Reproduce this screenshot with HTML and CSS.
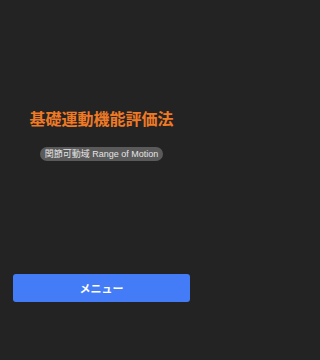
FILE: index.html
```html
<!DOCTYPE html>
<html lang="ja">
<head>
<meta charset="utf-8">
<link rel="stylesheet" href="styles.css">
</head>
<body>
<div class="screen">
  <div class="hero">
    <h1 class="title">基礎運動機能評価法</h1>
    <span class="pill">関節可動域 Range of Motion</span>
  </div>
  <div class="actions">
    <button class="menu-btn">メニュー</button>
  </div>
</div>
</body>
</html>
```
FILE: styles.css
```css
html, body {
  margin: 0;
  padding: 0;
  background: #232323;
}
body {
  font-family: "Noto Sans CJK JP", "Liberation Sans", sans-serif;
}
.screen {
  width: 203px;
  height: 360px;
  display: flex;
  flex-direction: column;
  box-sizing: border-box;
}
.hero {
  display: flex;
  flex-direction: column;
  align-items: center;
  padding-top: 107px;
}
.title {
  margin: 0;
  font-size: 16px;
  line-height: 23px;
  font-weight: 700;
  color: #ee7a26;
  letter-spacing: 0;
}
.pill {
  margin-top: 17px;
  height: 14px;
  line-height: 14px;
  padding: 0 5px;
  border-radius: 7px;
  background: #5a5a5a;
  color: #e4e4e4;
  font-family: "Liberation Sans", "Noto Sans CJK JP", sans-serif;
  font-size: 9px;
}
.actions {
  margin-top: auto;
  padding: 0 13px 58px;
}
.menu-btn {
  display: block;
  width: 100%;
  height: 28px;
  border: none;
  border-radius: 3px;
  background: #447cf8;
  color: #ffffff;
  font-family: "Noto Sans CJK JP", sans-serif;
  font-size: 11px;
  font-weight: 700;
  padding: 0;
}
```
